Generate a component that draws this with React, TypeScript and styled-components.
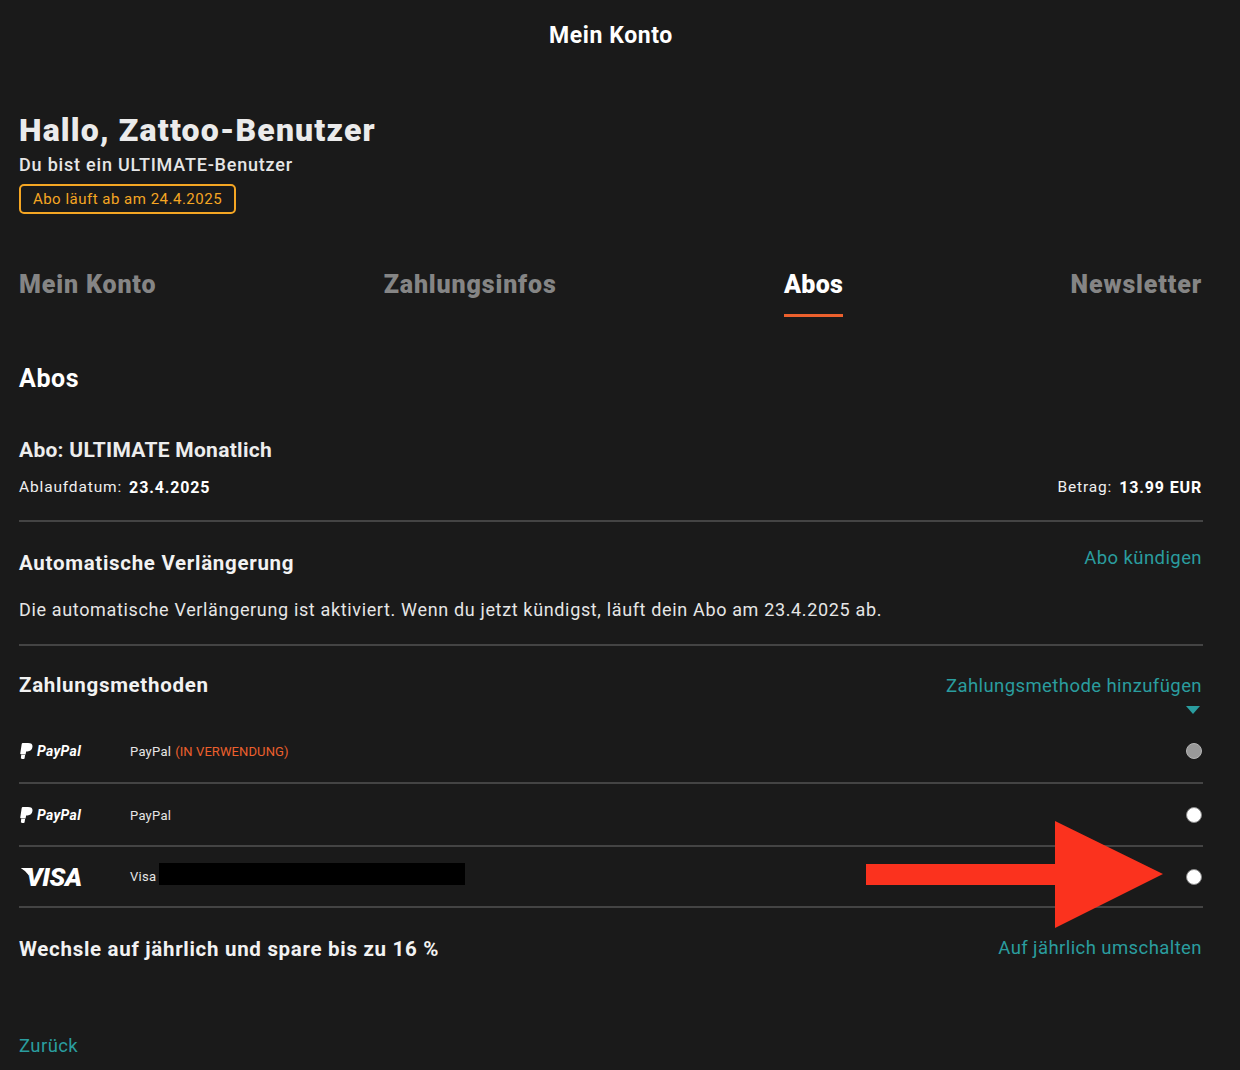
import styled, { createGlobalStyle } from 'styled-components';

const GlobalStyle = createGlobalStyle`
  html, body {
    margin: 0;
    padding: 0;
    background: #1a1a1a;
  }
  body {
    font-family: Roboto, "Liberation Sans", sans-serif;
    color: #f0f0f0;
  }
`;

const teal = '#2a9d9f';
const orange = '#ec602d';

const Page = styled.div`
  position: relative;
  width: 1240px;
  height: 1070px;
  overflow: hidden;
  box-sizing: border-box;
  padding: 0 37px 0 19px;
  background: #1a1a1a;
`;

const TopBar = styled.header`
  height: 70px;
  display: flex;
  align-items: center;
  justify-content: center;
  font-size: 23px;
  font-weight: 700;
  color: #fff;
  letter-spacing: 0.6px;
`;

const Hero = styled.section`
  padding-top: 41px;
  display: flex;
  flex-direction: column;
  align-items: flex-start;
`;

const Greeting = styled.h1`
  margin: 0;
  font-size: 32px;
  line-height: 38px;
  font-weight: 900;
  color: #ebebeb;
  letter-spacing: 1.17px;
`;

const Status = styled.div`
  margin-top: 5px;
  font-size: 18px;
  line-height: 22px;
  font-weight: 500;
  color: #e6e6e6;
  letter-spacing: 0.8px;
`;

const Expiry = styled.div`
  margin-top: 8px;
  box-sizing: border-box;
  height: 30px;
  width: 217px;
  display: flex;
  align-items: center;
  justify-content: center;
  border: 2px solid #f5a623;
  border-radius: 5px;
  font-size: 15px;
  color: #f5a623;
  letter-spacing: 0.5px;
`;

const Tabs = styled.nav`
  margin-top: 50px;
  padding-right: 1px;
  display: flex;
  justify-content: space-between;
`;

const Tab = styled.div<{ $active?: boolean }>`
  height: 53px;
  box-sizing: border-box;
  padding-top: 4px;
  font-size: 25px;
  line-height: 34px;
  font-weight: 900;
  letter-spacing: ${(p) => (p.$active ? '0.35px' : '0.85px')};
  color: ${(p) => (p.$active ? '#fff' : '#858585')};
  border-bottom: 3px solid ${(p) => (p.$active ? orange : 'transparent')};
`;

const SectionTitle = styled.h2`
  margin: 47px 0 0;
  font-size: 25px;
  line-height: 30px;
  font-weight: 700;
  color: #fff;
  letter-spacing: 0.6px;
`;

const PlanTitle = styled.h3`
  margin: 43px 0 0;
  font-size: 21px;
  line-height: 26px;
  font-weight: 700;
  color: #ededed;
  letter-spacing: 0.28px;
`;

const Block = styled.div<{ $height: number }>`
  height: ${(p) => p.$height}px;
  box-sizing: border-box;
  border-bottom: 2px solid #444;
`;

const SplitRow = styled.div<{ $pad?: number }>`
  display: flex;
  justify-content: space-between;
  align-items: center;
  padding-top: ${(p) => p.$pad ?? 0}px;
  padding-right: 1px;
`;

const Detail = styled.div`
  display: flex;
  align-items: center;
  gap: 7px;
  font-size: 15.5px;
  letter-spacing: 0.85px;
  color: #f0f0f0;

  strong {
    font-weight: 700;
    font-size: 16px;
    padding-top: 2px;
    letter-spacing: 0.85px;
    color: #fff;
  }
`;

const SubTitle = styled.div<{ $shift?: number }>`
  position: relative;
  top: ${(p) => p.$shift ?? 0}px;
  font-size: 20.5px;
  line-height: 26px;
  font-weight: 700;
  color: #f2f2f2;
  letter-spacing: 0.7px;
`;

const TextLink = styled.a<{ $shift?: number }>`
  position: relative;
  top: ${(p) => p.$shift ?? 0}px;
  font-size: 18.5px;
  line-height: 24px;
  color: ${teal};
  letter-spacing: 0.42px;
`;

const Body = styled.p`
  margin: 26px 0 0;
  font-size: 18px;
  line-height: 24px;
  color: #e6e6e6;
  letter-spacing: 0.65px;
`;

const Caret = styled.div`
  margin-top: 8px;
  margin-right: 3px;
  width: 0;
  height: 0;
  margin-left: auto;
  border-left: 7px solid transparent;
  border-right: 7px solid transparent;
  border-top: 8px solid ${teal};
`;

const MethodRow = styled.div<{ $height: number; $pad?: number }>`
  height: ${(p) => p.$height}px;
  box-sizing: border-box;
  padding-top: ${(p) => p.$pad ?? 0}px;
  display: flex;
  align-items: center;
  border-bottom: 2px solid #444;
`;

const Logo = styled.div`
  width: 111px;
  display: flex;
  align-items: center;
`;

const PayPalMarkSvg = styled.svg`
  margin-left: 1px;
`;

const PayPalWord = styled.span`
  margin-left: 4px;
  font-size: 14px;
  font-weight: 700;
  font-style: italic;
  letter-spacing: 0.3px;
  color: #fff;
`;

const MethodName = styled.div`
  flex: 1;
  display: flex;
  align-items: center;
  font-size: 13px;
  letter-spacing: 0.25px;
  color: #e6e6e6;
`;

const InUse = styled.span`
  margin-left: 4px;
  letter-spacing: 0.1px;
  color: ${orange};
`;

const Redacted = styled.span`
  margin-left: 3px;
  width: 306px;
  height: 22px;
  margin-top: -5px;
  background: #000;
`;

const Radio = styled.span<{ $checked?: boolean }>`
  box-sizing: border-box;
  width: 16px;
  height: 16px;
  margin-right: 1px;
  border-radius: 50%;
  background: ${(p) => (p.$checked ? '#999' : '#fff')};
  border: 1px solid ${(p) => (p.$checked ? '#b5b5b5' : '#888')};
`;

const VisaWord = styled.span`
  position: relative;
  margin-left: 7px;
  font-size: 26px;
  line-height: 1;
  font-weight: 900;
  font-style: italic;
  color: #fff;
  letter-spacing: -0.4px;

  &::before {
    content: '';
    position: absolute;
    left: -6px;
    top: 4px;
    width: 9px;
    height: 8px;
    background: #fff;
    clip-path: polygon(0 0, 100% 0, 100% 100%, 55% 45%);
  }
`;

const BackLink = styled(TextLink)`
  display: block;
  margin-top: 72px;
`;

const Arrow = styled.svg`
  position: absolute;
  left: 866px;
  top: 821px;
`;

const PayPalMark = () => (
  <PayPalMarkSvg width="13" height="16" viewBox="0 0 13 16" aria-hidden="true">
    <path
      fill="#fff"
      d="M2.8 0h5.2c3 0 4.8 1.1 4.5 3.7-.3 2.9-2.3 4.7-5.1 4.7H6.1l-.5 3H1.4C.6 11.4.1 10.9.3 10.2L1.7 1C1.8.4 2.2 0 2.8 0z"
    />
    <path fill="#fff" d="M1.2 12h3.9l-.5 3.2c-.1.5-.4.8-.9.8H1.8c-.6 0-1-.4-.9-.9z" />
  </PayPalMarkSvg>
);

const PayPalLogo = () => (
  <Logo>
    <PayPalMark />
    <PayPalWord>PayPal</PayPalWord>
  </Logo>
);

const App = () => (
  <Page>
    <GlobalStyle />
    <TopBar>Mein Konto</TopBar>
    <Hero>
      <Greeting>Hallo, Zattoo-Benutzer</Greeting>
      <Status>Du bist ein ULTIMATE-Benutzer</Status>
      <Expiry>Abo läuft ab am 24.4.2025</Expiry>
    </Hero>
    <Tabs>
      <Tab>Mein Konto</Tab>
      <Tab>Zahlungsinfos</Tab>
      <Tab $active>Abos</Tab>
      <Tab>Newsletter</Tab>
    </Tabs>
    <SectionTitle>Abos</SectionTitle>
    <PlanTitle>Abo: ULTIMATE Monatlich</PlanTitle>
    <Block $height={59}>
      <SplitRow $pad={13}>
        <Detail>
          Ablaufdatum: <strong>23.4.2025</strong>
        </Detail>
        <Detail>
          Betrag: <strong>13.99 EUR</strong>
        </Detail>
      </SplitRow>
    </Block>
    <Block $height={124}>
      <SplitRow $pad={24}>
        <SubTitle $shift={4}>Automatische Verlängerung</SubTitle>
        <TextLink $shift={-1}>Abo kündigen</TextLink>
      </SplitRow>
      <Body>
        Die automatische Verlängerung ist aktiviert. Wenn du jetzt kündigst, läuft dein Abo am 23.4.2025 ab.
      </Body>
    </Block>
    <SplitRow $pad={26}>
      <SubTitle>Zahlungsmethoden</SubTitle>
      <TextLink $shift={1}>Zahlungsmethode hinzufügen</TextLink>
    </SplitRow>
    <Caret />
    <MethodRow $height={70} $pad={6}>
      <PayPalLogo />
      <MethodName>
        PayPal <InUse>(IN VERWENDUNG)</InUse>
      </MethodName>
      <Radio $checked />
    </MethodRow>
    <MethodRow $height={63} $pad={1}>
      <PayPalLogo />
      <MethodName>PayPal</MethodName>
      <Radio />
    </MethodRow>
    <MethodRow $height={61}>
      <Logo>
        <VisaWord>VISA</VisaWord>
      </Logo>
      <MethodName>
        Visa <Redacted />
      </MethodName>
      <Radio />
    </MethodRow>
    <SplitRow $pad={28}>
      <SubTitle>Wechsle auf jährlich und spare bis zu 16 %</SubTitle>
      <TextLink $shift={-1}>Auf jährlich umschalten</TextLink>
    </SplitRow>
    <BackLink>Zurück</BackLink>
    <Arrow width="297" height="107" viewBox="0 0 297 107" aria-hidden="true">
      <polygon fill="#fb321e" points="0,43 189,43 189,0 297,53 189,107 189,64 0,64" />
    </Arrow>
  </Page>
);

export default App;
